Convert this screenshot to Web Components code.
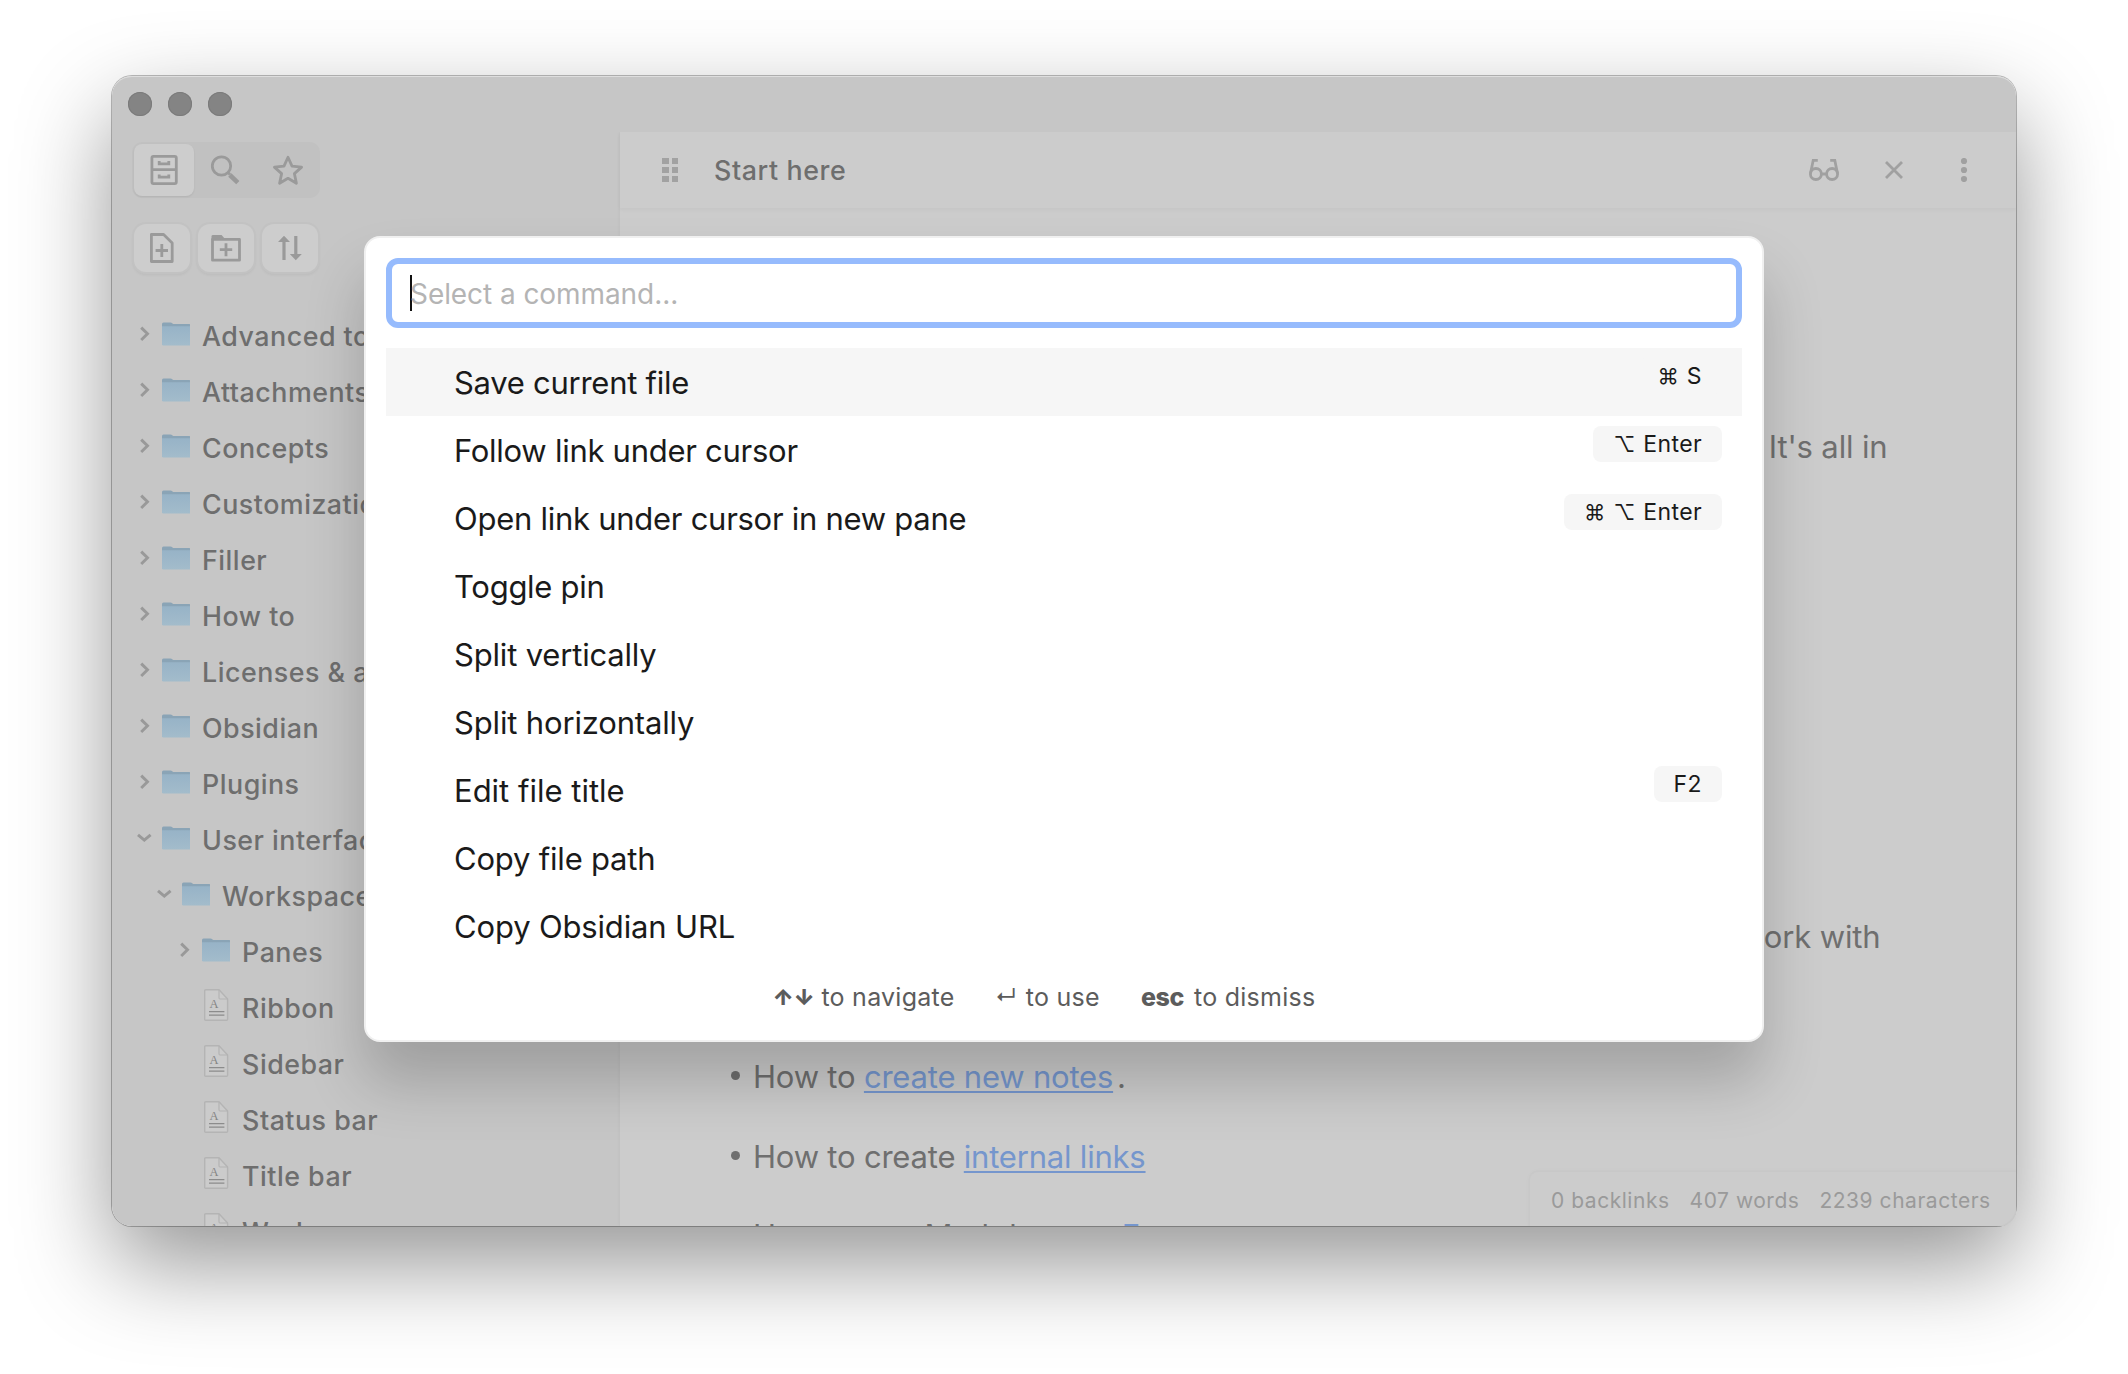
<!DOCTYPE html>
<html lang="en">
<head>
<meta charset="utf-8">
<title>Obsidian - Start here</title>
<style>
html,body{margin:0;height:100%;background:#fff;overflow:hidden}
body{font-family:Inter,"Noto Sans",sans-serif;display:flex;align-items:flex-start;padding:76px 0 0 112px;box-sizing:border-box}
</style>
</head>
<body>
<app-window>
  <side-bar slot="side">
    <tree-item label="Advanced topics"></tree-item>
    <tree-item label="Attachments"></tree-item>
    <tree-item label="Concepts"></tree-item>
    <tree-item label="Customization"></tree-item>
    <tree-item label="Filler"></tree-item>
    <tree-item label="How to"></tree-item>
    <tree-item label="Licenses &amp; attribution"></tree-item>
    <tree-item label="Obsidian"></tree-item>
    <tree-item label="Plugins"></tree-item>
    <tree-item label="User interface" open></tree-item>
    <tree-item label="Workspace" level="1" open></tree-item>
    <tree-item label="Panes" level="2"></tree-item>
    <tree-item label="Ribbon" level="2" kind="file"></tree-item>
    <tree-item label="Sidebar" level="2" kind="file"></tree-item>
    <tree-item label="Status bar" level="2" kind="file"></tree-item>
    <tree-item label="Title bar" level="2" kind="file"></tree-item>
    <tree-item label="Workspace" level="2" kind="file"></tree-item>
  </side-bar>
  <pane-header slot="main">Start here</pane-header>
  <note-body slot="main"></note-body>
  <status-bar slot="status"><span>0 backlinks</span><span>407 words</span><span>2239 characters</span></status-bar>
  <command-palette slot="modal">
    <command-item selected keys="⌘ S">Save current file</command-item>
    <command-item keys="⌥ Enter">Follow link under cursor</command-item>
    <command-item keys="⌘ ⌥ Enter">Open link under cursor in new pane</command-item>
    <command-item>Toggle pin</command-item>
    <command-item style="letter-spacing:-.18px">Split vertically</command-item>
    <command-item style="letter-spacing:-.16px">Split horizontally</command-item>
    <command-item keys="F2" style="letter-spacing:0">Edit file title</command-item>
    <command-item style="letter-spacing:-.2px">Copy file path</command-item>
    <command-item style="letter-spacing:-.16px">Copy Obsidian URL</command-item>
    <key-hint slot="hints" style="width:222.5px;gap:7px"><b slot="key" style="font-size:22px;letter-spacing:-.3px;font-weight:900">↑↓</b>to navigate</key-hint>
    <key-hint slot="hints" style="width:146px"><span slot="key" style="font-size:22px;letter-spacing:0;padding-bottom:2px">↵</span>to use</key-hint>
    <key-hint slot="hints" style="gap:10px"><b slot="key" style="letter-spacing:-.4px;font-weight:800">esc</b>to dismiss</key-hint>
  </command-palette>
</app-window>

<script>
const define = (name, render) => customElements.define(name, class extends HTMLElement {
  connectedCallback() {
    if (this.shadowRoot) return;
    this.attachShadow({ mode: 'open' }).innerHTML = render(this);
  }
});

define('app-window', () => `
<style>
:host{display:flex;position:relative;width:1904px;height:1150px;border-radius:20px;flex:none;
  box-shadow:0 0 0 1px rgba(0,0,0,.26),0 38px 94px rgba(0,0,0,.42)}
.clip{display:flex;flex-direction:column;flex:1;border-radius:20px;overflow:hidden;background:#c6c6c6;box-shadow:inset 0 2px 0 -1px #dedede}
.title{display:flex;align-items:center;gap:16px;height:56px;padding-left:16px;box-sizing:border-box;flex:none}
.title i{width:24px;height:24px;border-radius:50%;background:#848484;box-shadow:inset 0 0 0 1px #7b7b7b}
.work{display:flex;flex:1;min-height:0}
.main{display:flex;flex-direction:column;flex:1;background:#ccc;box-shadow:-1px 0 3px rgba(0,0,0,.03);clip-path:inset(0 0 0 -4px)}
::slotted([slot=status]){position:absolute;right:0;bottom:0}
::slotted([slot=modal]){position:absolute;left:252px;top:160px}
</style>
<div class="clip">
  <div class="title"><i></i><i></i><i></i></div>
  <div class="work"><slot name="side"></slot><div class="main"><slot name="main"></slot></div></div>
</div>
<slot name="status"></slot><slot name="modal"></slot>`);

define('side-bar', () => `
<style>
:host{display:flex;flex-direction:column;width:508px;padding-top:10px;box-sizing:border-box;overflow:hidden;color:#9a9a9a}
.tabs{display:flex;align-self:flex-start;margin-left:20px;width:188px;height:56px;padding:2px;box-sizing:border-box;border-radius:10px;background:#c1c1c1;flex:none}
.tabs span{display:flex;align-items:center;justify-content:center;width:62px;height:52px;box-sizing:border-box;flex:none}
.tabs .on{width:60px;background:#cdcdcd;border-radius:8px;box-shadow:0 1px 2px rgba(0,0,0,.08)}
.tabs .star{padding-left:2px}
.actions{display:flex;gap:8px;margin:26px 0 36px 22px;flex:none}
.actions span{display:flex;align-items:center;justify-content:center;width:56px;height:48px;border-radius:12px;background:#cdcdcd;box-shadow:0 0 0 2px #c2c2c2,0 2px 3px 1px rgba(0,0,0,.06)}
svg{display:block;fill:none;stroke:currentColor;stroke-width:2.8}
</style>
<div class="tabs">
  <span class="on"><svg width="28" height="30" viewBox="0 0 28 30"><rect x="1.9" y="1.4" width="24.4" height="27.2" rx="1.6"/><path d="M2 14.6h24M9.2 6v2.8h9.6V6M9.2 19.4v2.8h9.6v-2.8"/></svg></span>
  <span><svg width="30" height="30" viewBox="0 0 30 30"><circle cx="11.500" cy="11" r="9.200"/><path d="M18.500 18l1.500 1.500"/><path d="M19.800 20l8 7.600" stroke-width="4.600"/></svg></span>
  <span class="star"><svg width="32" height="32" viewBox="0 0 32 32"><path stroke-linejoin="round" d="M16 3.200l4 8.900 9.600 1-7.200 6.500 2 9.700-8.400-5-8.400 5 2-9.700-7.200-6.500 9.600-1z"/></svg></span>
</div>
<div class="actions">
  <span><svg width="26" height="30" viewBox="0 0 26 30"><path stroke-linejoin="round" d="M2.400 1.500h12.200l8.600 8.400v18.600H2.400zM12.800 11v13M6.600 17.500h12.400"/></svg></span>
  <span><svg width="30" height="28" viewBox="0 0 30 28"><path stroke-linejoin="round" d="M1.500 5.400h27v20.800h-27zM15 9.200v13M8.800 15.700h12.400"/><path fill="currentColor" stroke="none" d="M.5 6V2.400Q.5 1 2 1h8.600l3.400 4z"/></svg></span>
  <span><svg width="26" height="26" viewBox="0 0 26 26"><path d="M7 5v20M18.800 1v20" stroke-width="3.200"/><path fill="currentColor" stroke="none" d="M7 .8l6 6.200H1zM18.800 25.200l6-6.200H12.800z"/></svg></span>
</div>
<slot></slot>`);

define('tree-item', el => {
  const level = +(el.getAttribute('level') || 0), file = el.getAttribute('kind') === 'file';
  const chevron = file ? '' : el.hasAttribute('open')
    ? '<path d="M4 6.800l6.300 5.400 6.300-5.400"/>' : '<path d="M7.200 3.600l6.300 6.200-6.300 6.200"/>';
  const icon = file
    ? `<svg width="28.600" height="34" viewBox="0 0 28.600 34"><path fill="#cbcbcb" stroke="#b4b4b4" stroke-width="1.400" stroke-linejoin="round" d="M3.700 1.700h13.300l8.600 9.300v20.300q0 1-1 1H3.700q-1 0-1-1V2.700q0-1 1-1z"/><path fill="none" stroke="#b4b4b4" stroke-width="1.200" d="M17 2v7.800q0 1.200 1 1.200h7.400"/><path fill="none" stroke="#8c8c8c" stroke-width="1.300" d="M7 23.600h15.400M7 27.200h15.400"/><text x="12.200" y="20" text-anchor="middle" font-family="Liberation Serif" font-size="12.500" fill="#858585">A</text></svg>`
    : `<svg width="28.600" height="24" viewBox="0 0 28.600 24"><defs><linearGradient id="g" x2="0" y2="1"><stop offset="0" stop-color="#97b3c7"/><stop offset="1" stop-color="#a3bccb"/></linearGradient></defs><path fill="#8aa4b6" d="M0 2Q0 .5 1.500.5h7q1 0 1.700.7l1 .8h16q1.400 0 1.400 1.400V8H0z"/><path fill="url(#g)" d="M0 4.300h28.600v17.900q0 1.400-1.400 1.400H1.400Q0 23.600 0 22.200z"/></svg>`;
  return `
<style>
:host{display:flex;align-items:center;height:56px;flex:none;white-space:nowrap;padding-left:${22 + level * 20}px;color:#6e6e6e;font-weight:500;font-size:26.800px;letter-spacing:.5px}
.chev{width:20px;height:20px;margin:0 7.700px 4px 0;fill:none;stroke:#999;stroke-width:2.900}
.icon{display:flex;width:28.600px;margin:0 11.800px ${file ? 6 : 4}px 0}
</style>
<svg class="chev" viewBox="0 0 20 20">${chevron}</svg><span class="icon">${icon}</span><span>${el.getAttribute('label').replace('&', '&amp;')}</span>`;
});

define('pane-header', () => `
<style>
:host{display:flex;align-items:center;height:76px;flex:none;padding:0 46px 0 42px;color:#6e6e6e;font-weight:500;font-size:26.800px;letter-spacing:.6px;box-shadow:0 2px 4px rgba(0,0,0,.035)}
.grip{display:grid;grid-template-columns:6.500px 6.500px;grid-auto-rows:6px;gap:3px;margin-right:36px}
.grip i{background:#a2a2a2}
slot{display:block;flex:1}
svg{display:block;fill:none;stroke:#a0a0a0;stroke-width:2.800;margin-top:-1px}
.acts{display:flex;align-items:center}
</style>
<div class="grip"><i></i><i></i><i></i><i></i><i></i><i></i></div>
<slot></slot>
<div class="acts">
  <svg width="30" height="24" viewBox="0 0 30 24"><circle cx="6.900" cy="16" r="5.500"/><circle cx="23.100" cy="16" r="5.500"/><path d="M12.400 16h5.200M1.500 15.500L4.200 2.300h4.600M28.500 15.500L25.800 2.300h-4.600"/></svg>
  <svg width="20" height="20" viewBox="0 0 20 20" style="margin-left:45px"><path d="M2 2l16 16M18 2L2 18"/></svg>
  <svg width="12" height="24" viewBox="0 0 12 24" style="margin:-1px 0 0 54px"><g fill="#a0a0a0" stroke="none"><circle cx="6" cy="3" r="3.100"/><circle cx="6" cy="12" r="3.100"/><circle cx="6" cy="21" r="3.100"/></g></svg>
</div>`);

define('note-body', () => `
<style>
:host{display:flex;flex-direction:column;flex:1;min-height:0;overflow:hidden;padding-top:213.500px;color:#6f6f6f;font-size:31px;line-height:50px;letter-spacing:-.14px}
p{margin:0;flex:none;text-align:right}
.a{padding-right:128.500px}
.b{margin-top:440.500px;padding-right:135.500px}
ul{list-style:none;margin:89.500px 0 0;padding:0 0 0 111px;display:flex;flex-direction:column;gap:30px;letter-spacing:-.2px}
li{display:flex;align-items:center;height:50px;flex:none;white-space:pre}
li::before{content:"";width:9px;height:9px;border-radius:50%;background:#6f6f6f;margin:0 13px 2px 0}
a{color:#7596cd;text-decoration:underline;text-decoration-thickness:2px;text-underline-offset:3px;text-decoration-skip-ink:none}
</style>
<p class="a">It's all in</p>
<p class="b">work with</p>
<ul>
  <li><span>How to <a>create new notes</a><span style="padding-left:4px">.</span></span></li>
  <li><span>How to create <a>internal links</a></span></li>
  <li style="margin-top:-1px"><span>How to use Markdown to <a style="margin-left:-1px">Format your notes</a></span></li>
</ul>`);

define('status-bar', () => `
<style>
:host{display:flex;align-items:center;gap:20px;width:486px;height:54px;padding:3px 0 0 21px;box-sizing:border-box;border-radius:8px 0 20px 0;background:#ccc;box-shadow:0 0 0 1.500px #c8c8c8,0 0 6px rgba(0,0,0,.03);clip-path:inset(-6px 0 0 -6px);color:#9a9a9a;font-size:21px;letter-spacing:.53px;white-space:nowrap}
</style><slot></slot>`);

define('command-palette', () => `
<style>
:host{display:flex;flex-direction:column;width:1400px;height:806px;box-sizing:border-box;border:2px solid #f0f0f0;border-radius:16px;background:#fff;padding:20px;box-shadow:0 40px 60px rgba(0,0,0,.2)}
.input{display:flex;align-items:center;height:70px;box-sizing:border-box;border:6px solid #96bbfd;border-radius:12px;padding-left:18px;font-size:28px;color:#b4b4b4;letter-spacing:-.07px;margin-bottom:20px;flex:none}
.input span+span{padding-top:2px}
.caret{width:2px;height:36px;background:#111;margin:0 -2px 1px 0}
.hints{display:flex;align-items:center;height:74px;flex:none;padding-left:386.500px}
</style>
<div class="input"><span class="caret"></span><span>Select a command...</span></div>
<slot></slot>
<div class="hints"><slot name="hints"></slot></div>`);

define('command-item', el => {
  const keys = (el.getAttribute('keys') || '').split(' ').filter(Boolean);
  return `
<style>
:host{display:flex;align-items:center;height:68px;flex:none;box-sizing:border-box;padding:0 20px 0 68px;font-size:31px;letter-spacing:-.27px;color:#1a1a1a;${el.hasAttribute('selected') ? 'background:#f6f6f6' : ''}}
slot{display:block;flex:1;padding-top:1px}
.keys{display:flex;align-items:center;gap:8px;align-self:flex-start;margin-top:10px;height:36px;padding:0 20px;border-radius:8px;background:#f6f6f6;font-size:23px;letter-spacing:.4px}
.sym{font-size:21.300px;letter-spacing:0}
</style>
<slot></slot>${keys.length ? `<span class="keys">${keys.map(k => `<span${/[⌘⌥]/.test(k) ? ' class="sym"' : ''}>${k}</span>`).join('')}</span>` : ''}`;
});

define('key-hint', () => `
<style>
:host{display:flex;align-items:center;gap:9px;font-size:25px;letter-spacing:.25px;color:#5c5c5c;white-space:nowrap}
</style><slot name="key"></slot><span><slot></slot></span>`);
</script>
</body>
</html>
